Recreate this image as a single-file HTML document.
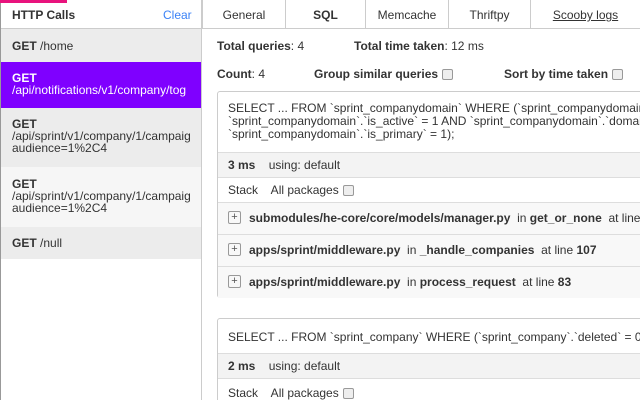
<!DOCTYPE html>
<html style="overflow:hidden;width:640px;height:400px"><head><style>
*{box-sizing:border-box;margin:0;padding:0}
body{width:640px;height:400px;overflow:hidden;font-family:"Liberation Sans","DejaVu Sans",sans-serif;font-size:12px;color:#333;background:#fff;position:relative}
.abs{position:absolute}
#pink{left:0;top:0;width:67px;height:3px;background:#e8137d}
#left{left:0;top:0;width:202px;height:400px;border-right:1px solid #ccc;border-left:1px solid #999}
#lh{left:12px;top:8px;font-weight:bold;color:#333}
#clear{left:163px;top:8px;color:#3b82f6}
.item{position:absolute;left:1px;width:200px;padding:0 0 0 11px;line-height:12px}
.item b{font-weight:bold}
#tabs{left:202px;top:0;width:438px;height:29px;border-bottom:1px solid #ccc}
.tab{position:absolute;top:0;height:29px;line-height:31px;text-align:center;border-left:1px solid #ccc}
.chk{display:inline-block;width:11px;height:11px;border:1px solid #999;border-radius:2px;background:#eee;vertical-align:-2px;margin-left:4px}
#clip{position:absolute;left:0;top:0;width:640px;height:400px;overflow:hidden}
.card{position:absolute;left:217px;width:440px;border:1px solid #ccc;border-radius:3px;background:#fff}
.row{border-top:1px solid #ddd;padding-left:10px;white-space:nowrap}
.plus{display:inline-block;width:13px;height:13px;border:1px solid #999;border-radius:2px;font-size:11px;line-height:11px;text-align:center;margin-right:8px;vertical-align:middle;position:relative;top:-1px;color:#555}
</style></head><body>
<div id="clip">
<div id="left" class="abs"></div>
<div id="pink" class="abs"></div>
<div class="abs" style="left:1px;top:28px;width:201px;border-top:1px solid #ccc"></div>
<div id="lh" class="abs">HTTP Calls</div>
<div id="clear" class="abs">Clear</div>
<div class="item" style="top:29px;height:33px;background:#ececec;padding-top:11px"><b>GET</b> /home</div>
<div class="item" style="top:62px;height:46px;background:#7f00ff;color:#fff;padding-top:10px;white-space:nowrap;overflow:hidden"><b>GET</b><br>/api/notifications/v1/company/tog</div>
<div class="item" style="top:108px;height:59px;background:#ececec;padding-top:10px;white-space:nowrap;overflow:hidden"><b>GET</b><br>/api/sprint/v1/company/1/campaig<br>audience=1%2C4</div>
<div class="item" style="top:167px;height:60px;background:#f6f6f6;padding-top:11px;white-space:nowrap;overflow:hidden"><b>GET</b><br>/api/sprint/v1/company/1/campaig<br>audience=1%2C4</div>
<div class="item" style="top:227px;height:32px;background:#ececec;padding-top:10px"><b>GET</b> /null</div>
<div id="tabs" class="abs">
<div class="tab" style="left:0;width:83px">General</div>
<div class="tab" style="left:83px;width:80px;font-weight:bold">SQL</div>
<div class="tab" style="left:163px;width:83px">Memcache</div>
<div class="tab" style="left:246px;width:82px">Thriftpy</div>
<div class="tab" style="left:328px;width:110px;text-decoration:underline">Scooby logs</div>
</div>
<div class="abs" style="left:217px;top:39px"><b>Total queries</b>: 4</div>
<div class="abs" style="left:354px;top:39px"><b>Total time taken</b>: 12 ms</div>
<div class="abs" style="left:217px;top:67px"><b>Count</b>: 4</div>
<div class="abs" style="left:314px;top:67px"><b>Group similar queries</b><span class="chk"></span></div>
<div class="abs" style="left:504px;top:67px"><b>Sort by time taken</b><span class="chk"></span></div>
<div class="card" style="top:91px;height:207px">
<div style="padding:10px 0 0 10px;height:60px;line-height:13px;white-space:nowrap">SELECT ... FROM `sprint_companydomain` WHERE (`sprint_companydomain`.`company_id` = 1 AND<br>`sprint_companydomain`.`is_active` = 1 AND `sprint_companydomain`.`domain` = 'x' AND<br>`sprint_companydomain`.`is_primary` = 1);</div>
<div class="row" style="height:25px;line-height:24px;background:#f3f3f3"><b>3 ms</b>&nbsp;&nbsp;&nbsp; using: default</div>
<div class="row" style="height:25px;line-height:24px">Stack&nbsp;&nbsp;&nbsp; All packages<span class="chk"></span></div>
<div class="row" style="height:32px;line-height:31px;background:#f8f8f8"><span class="plus">+</span><b>submodules/he-core/core/models/manager.py</b>&nbsp; in <b>get_or_none</b>&nbsp; at line 10</div>
<div class="row" style="height:32px;line-height:31px;background:#f8f8f8"><span class="plus">+</span><b>apps/sprint/middleware.py</b>&nbsp; in <b>_handle_companies</b>&nbsp; at line <b>107</b></div>
<div class="row" style="height:32px;line-height:31px;background:#f8f8f8"><span class="plus">+</span><b>apps/sprint/middleware.py</b>&nbsp; in <b>process_request</b>&nbsp; at line <b>83</b></div>
</div>
<div class="card" style="top:318px;height:100px">
<div style="padding-left:10px;height:34px;line-height:36px;white-space:nowrap">SELECT ... FROM `sprint_company` WHERE (`sprint_company`.`deleted` = 0 AND</div>
<div class="row" style="height:25px;line-height:24px;background:#f3f3f3"><b>2 ms</b>&nbsp;&nbsp;&nbsp; using: default</div>
<div class="row" style="height:30px;line-height:28px">Stack&nbsp;&nbsp;&nbsp; All packages<span class="chk"></span></div>
</div>
</div>
</body></html>
